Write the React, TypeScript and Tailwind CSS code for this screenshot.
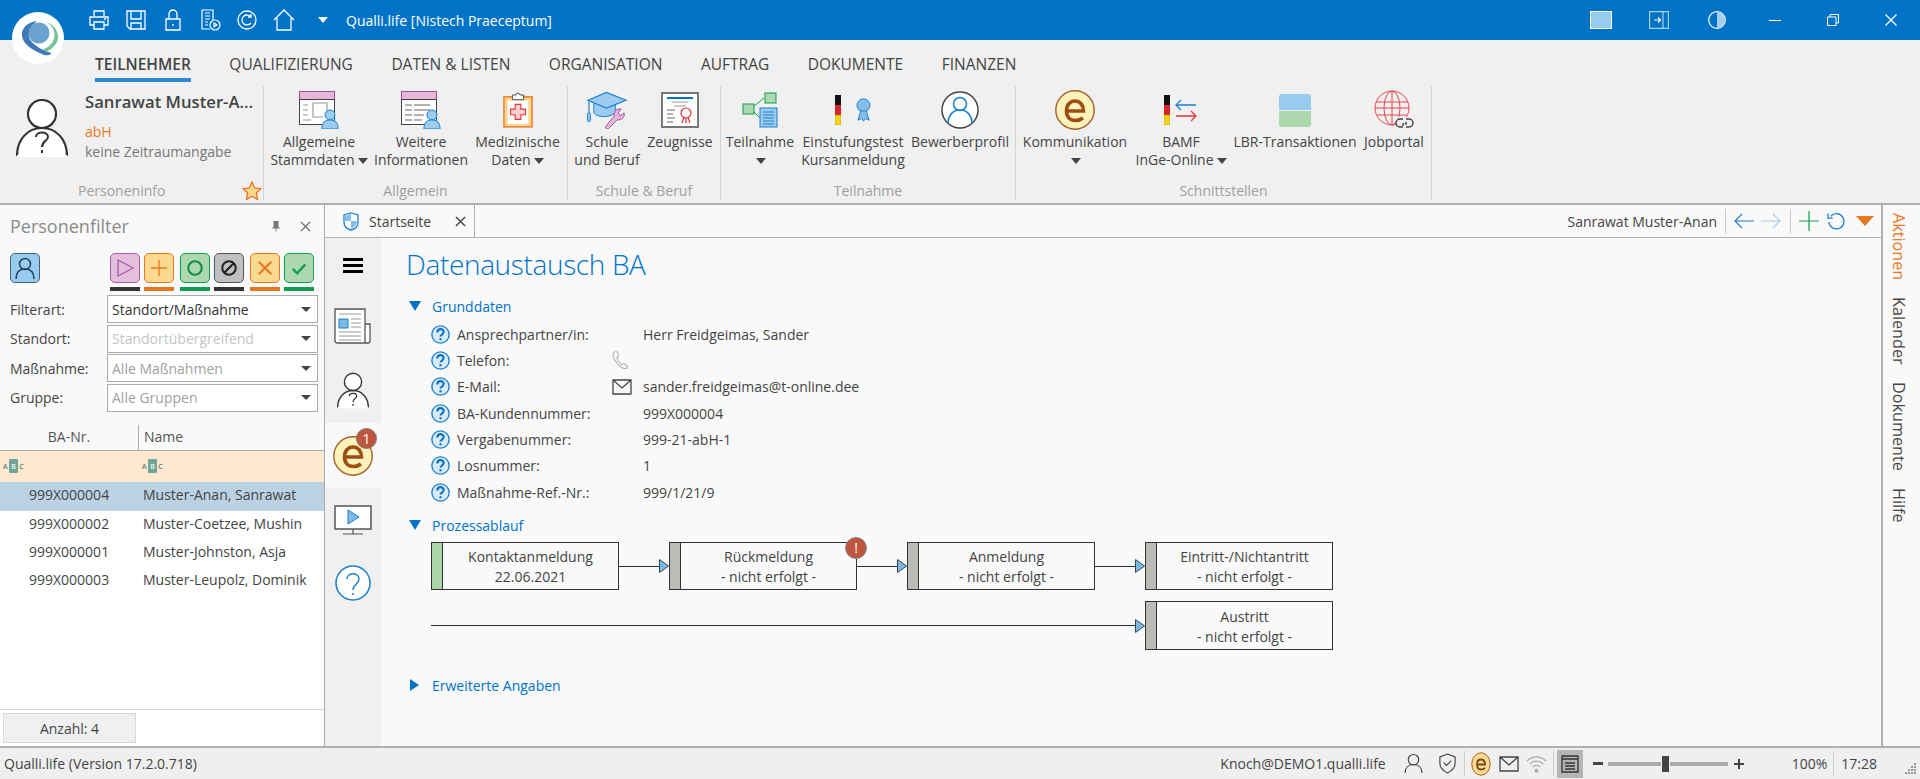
import type { ReactNode } from 'react';

type P = { className?: string };

const Logo = () => (
  <svg viewBox="0 0 52 52" className="w-[52px] h-[52px]">
    <circle cx="26" cy="26" r="26" fill="#fff" />
    <path d="M25 9C17 10 9 15 10 24c1 8 10 14 22 19 4 1 8-1 7-2-9-3-16-7-20-12-4-5-3-13 6-20z" fill="#3f78b6" />
    <circle cx="27" cy="21" r="10.5" fill="#69a1cf" />
    <path d="M34 10c6 3 10 9 8 17-2 5-6 9-11 10l3 3c6-3 12-8 12-15 0-7-5-13-12-15z" fill="#76c295" />
  </svg>
);

const W = 'none';
const Printer = () => (
  <svg viewBox="0 0 22 22" className="w-[22px] h-[22px]" fill={W} stroke="#fff" strokeWidth="1.3">
    <path d="M6 7V2h10v5M6 16H2V8h18v8h-4M6 13h10v7H6zM16 10h2" />
  </svg>
);
const Floppy = () => (
  <svg viewBox="0 0 22 22" className="w-[22px] h-[22px]" fill={W} stroke="#fff" strokeWidth="1.3">
    <path d="M2 2h18v18H5l-3-3zM6 2v8h10V2M6 20v-6h10v6" />
  </svg>
);
const Lock = () => (
  <svg viewBox="0 0 22 22" className="w-[22px] h-[22px]" fill={W} stroke="#fff" strokeWidth="1.3">
    <path d="M4 10h14v11H4zM7 10V5a4 4 0 0 1 8 0v5M11 15v2" />
  </svg>
);
const DocPlay = () => (
  <svg viewBox="0 0 22 22" className="w-[22px] h-[22px]" fill={W} stroke="#fff" strokeWidth="1.2">
    <path d="M3 1h11v10M3 1v19h8M6 4h5M6 7h5M6 10h5M6 13h3M6 16h3" />
    <circle cx="16" cy="16" r="5" />
    <path d="M15 14l3 2-3 2z" />
  </svg>
);
const Refresh = () => (
  <svg viewBox="0 0 22 22" className="w-[22px] h-[22px]" fill={W} stroke="#fff" strokeWidth="1.3">
    <circle cx="11" cy="11" r="9" />
    <path d="M15 8a5 5 0 1 0 0 6M15 5v3h-3" />
  </svg>
);
const Home = () => (
  <svg viewBox="0 0 22 22" className="w-[22px] h-[22px]" fill={W} stroke="#fff" strokeWidth="1.3">
    <path d="M1 11L11 1l10 10M4 9v12h14V9" />
  </svg>
);

const PersonQ = ({ className }: P) => (
  <svg viewBox="0 0 52 58" className={className} fill="#f0f0f0" stroke="#333" strokeWidth="2.2">
    <path d="M1 57C1 40 12 29 26 29s25 11 25 28" fill="#fff" />
    <path d="M1 57h50" stroke="#fff" />
    <ellipse cx="26" cy="15" rx="14" ry="14" fill="#fff" />
    <path d="M20 38c0-6 12-6 12 0 0 4-6 4-6 10" fill="none" strokeWidth="2" />
    <path d="M26 51v3" fill="none" strokeWidth="2" />
  </svg>
);

const Star = () => (
  <svg viewBox="0 0 20 20" className="w-[20px] h-[20px]">
    <path d="M10 1l2.7 6 6.3.7-4.7 4.3 1.3 6.5L10 15.2l-5.6 3.3 1.3-6.5L1 7.7 7.3 7z" fill="#f9d98b" stroke="#e87722" strokeWidth="1.3" />
  </svg>
);

const FormIcon = ({ lines }: { lines?: boolean }) => (
  <svg viewBox="0 0 40 38" className="w-[40px] h-[38px]">
    <rect x="0.5" y="0.5" width="35" height="8" fill="#e3b8da" stroke="#a04fa0" />
    <rect x="0.5" y="8.5" width="35" height="25" fill="#fff" stroke="#444" />
    {lines ? (
      <path d="M4 14h7M4 19h7M4 24h7M4 29h7M13 14h16M13 19h16M13 24h10M13 29h8" stroke="#999" strokeWidth="1.5" />
    ) : (
      <path d="M4 14h5M4 19h5M4 24h5M4 29h8M14 12h14v14M14 12v14h10" stroke="#999" strokeWidth="1.2" fill="none" />
    )}
    <circle cx="31" cy="24" r="5" fill="#9ccdf0" stroke="#1a7fcf" />
    <path d="M23 38c0-7 3-9 8-9s8 2 8 9z" fill="#9ccdf0" stroke="#1a7fcf" />
  </svg>
);

const MedIcon = () => (
  <svg viewBox="0 0 32 38" className="w-[30px] h-[38px]">
    <rect x="1" y="5" width="30" height="32" fill="#fbd68c" stroke="#e87722" strokeWidth="1.5" />
    <rect x="5" y="9" width="22" height="25" fill="#fff" />
    <path d="M10 3h4a2 2 0 0 1 4 0h4v5H10z" fill="#fff" stroke="#444" />
    <path d="M13 13h6v5h5v6h-5v5h-6v-5H8v-6h5z" fill="#fbd0d0" stroke="#e0353c" strokeWidth="1.2" />
  </svg>
);

const GradIcon = () => (
  <svg viewBox="0 0 42 38" className="w-[41px] h-[38px]">
    <path d="M7 12v10c4 5 16 5 22 0V12" fill="#9ccdf0" stroke="#1a7fcf" />
    <path d="M1 9L20 1l20 8-20 8z" fill="#9ccdf0" stroke="#1a7fcf" strokeWidth="1.2" />
    <path d="M2 10v14" stroke="#1a7fcf" strokeWidth="1.2" />
    <rect x="0.5" y="22" width="3" height="9" rx="1.5" fill="#9ccdf0" stroke="#1a7fcf" />
    <path d="M19 36l9-11c-1-4 2-8 7-7l-3 4 2 3 4-3c1 5-3 8-7 7l-9 9c-2 1-4-1-3-2z" fill="#e3b8da" stroke="#a04fa0" />
  </svg>
);

const CertIcon = () => (
  <svg viewBox="0 0 38 36" className="w-[38px] h-[36px]">
    <rect x="1" y="1" width="36" height="34" fill="#fff" stroke="#777" strokeWidth="2" />
    <path d="M6 6h26" stroke="#0173c7" strokeWidth="2" />
    <path d="M11 10h16M13 14h12" stroke="#999" strokeWidth="1.2" />
    <path d="M6 18h8M6 22h6M6 26h8M6 30h6" stroke="#999" strokeWidth="1.5" />
    <circle cx="25" cy="21" r="5" fill="#fff" stroke="#e0353c" strokeWidth="1.2" />
    <path d="M21 31l2-6M29 31l-2-6M25 26v5" stroke="#e0353c" strokeWidth="1.2" />
  </svg>
);

const TreeIcon = () => (
  <svg viewBox="0 0 36 36" className="w-[36px] h-[36px]">
    <path d="M11 15l11-9M11 19l7 7" stroke="#0f9d4f" fill="none" />
    <rect x="1" y="12" width="11" height="10" fill="#add8ae" stroke="#0f9d4f" />
    <rect x="23" y="1" width="11" height="10" fill="#add8ae" stroke="#0f9d4f" />
    <rect x="18" y="16" width="17" height="19" fill="#9ccdf0" stroke="#1a7fcf" />
    <path d="M21 20h11M21 23h11M21 26h11M21 29h11M21 32h11" stroke="#1a7fcf" />
  </svg>
);

const Flag = () => (
  <svg viewBox="0 0 6 30" className="w-[6px] h-[30px]">
    <rect width="6" height="10" fill="#111" />
    <rect y="10" width="6" height="10" fill="#d8232a" />
    <rect y="20" width="6" height="10" fill="#f2d21a" stroke="#a90" strokeWidth="0.5" />
  </svg>
);

const BadgeIcon = () => (
  <div className="flex items-center gap-[15px]">
    <Flag />
    <svg viewBox="0 0 16 28" className="w-[15px] h-[26px]">
      <circle cx="8" cy="9" r="7" fill="#86bde8" stroke="#1a7fcf" />
      <path d="M5 15l-3 10 4-2 2 3 2-3 4 2-3-10z" fill="#86bde8" stroke="#1a7fcf" />
    </svg>
  </div>
);

const ProfileIcon = () => (
  <svg viewBox="0 0 38 38" className="w-[38px] h-[38px]">
    <circle cx="19" cy="19" r="18" fill="#fff" stroke="#444" strokeWidth="1.5" />
    <circle cx="19" cy="13" r="6.5" fill="none" stroke="#1a7fcf" strokeWidth="1.5" />
    <path d="M7 33c0-9 5-14 12-14s12 5 12 14" fill="none" stroke="#1a7fcf" strokeWidth="1.5" />
  </svg>
);

const EIcon = ({ className }: P) => (
  <svg viewBox="0 0 40 40" className={className}>
    <circle cx="20" cy="20" r="19.2" fill="#fdf3ba" stroke="#a5612a" strokeWidth="1.4" />
    <path d="M11.5 21h17c0-6-3.5-10-8.5-10s-8.5 4-8.5 10 3.5 9.5 9 9.5c3 0 5.500-1 7.500-2.500" fill="none" stroke="#9c4f14" strokeWidth="3.6" />
  </svg>
);

const EStatus = () => (
  <svg viewBox="0 0 20 24" className="ml-[6px] w-[20px] h-[24px]">
    <ellipse cx="10" cy="12" rx="9.2" ry="11.2" fill="#fbd98e" stroke="#a5612a" strokeWidth="1" />
    <path d="M6 12.5h8c0-3-1.5-5-4-5s-4 2-4 5 1.5 5 4 5c1.5 0 3-.5 4-1.500" fill="none" stroke="#7a4a1c" strokeWidth="1.8" />
  </svg>
);

const BamfIcon = () => (
  <div className="flex items-center gap-[4px]">
    <Flag />
    <svg viewBox="0 0 24 26" className="w-[24px] h-[26px]" fill="none" strokeWidth="1.3">
      <path d="M22 8H2M7 3L2 8l5 5" stroke="#1a7fcf" />
      <path d="M2 19h20M17 14l5 5-5 5" stroke="#e0353c" />
    </svg>
  </div>
);

const LbrIcon = () => (
  <div className="flex flex-col gap-[1px] w-[32px]">
    <div className="h-[16px] rounded-t-[3px] bg-[#97cbef]" />
    <div className="h-[16px] rounded-b-[3px] bg-[#add8ae]" />
  </div>
);

const GlobeIcon = () => (
  <svg viewBox="0 0 40 40" className="w-[40px] h-[40px]" fill="none">
    <g stroke="#e8474c" strokeWidth="1">
      <circle cx="18" cy="18" r="17" />
      <ellipse cx="18" cy="18" rx="8" ry="17" />
      <path d="M18 1v34M2 12h32M1 18h34M3 25h30" />
    </g>
    <rect x="22" y="27" width="17" height="12" fill="#f0f0f0" />
    <path d="M29 29h-3a4 4 0 0 0 0 8h3M32 29h3a4 4 0 0 1 0 8h-3M29 33v3M32 32v3" stroke="#444" strokeWidth="1.5" />
  </svg>
);

const Caret = () => <span className="inline-block ml-[3px] w-0 h-0 border-l-[5px] border-r-[5px] border-t-[6px] border-l-transparent border-r-transparent border-t-[#444] align-middle" />;

type RibbonBtn = { w: string; icon: ReactNode; lines: ReactNode[] };

const RibbonButton = ({ w, icon, lines }: RibbonBtn) => (
  <div className={`flex flex-col items-center ${w}`}>
    <div className="mt-[2px] h-[44px] flex items-center justify-center">{icon}</div>
    <div className="mt-[1px] text-center leading-[18px] text-[#444] whitespace-nowrap">
      {lines.map((l, i) => (
        <div key={i}>{l}</div>
      ))}
    </div>
  </div>
);

const RibbonGroup = ({ w, label, children }: { w: string; label: string; children: ReactNode }) => (
  <div className={`flex flex-col h-[114px] border-r border-[#d2d2d2] ${w}`}>
    <div className="flex h-[96px]">{children}</div>
    <div className="h-[18px] leading-[18px] text-center text-[#a0a0a0]">{label}</div>
  </div>
);

const tabs = ['TEILNEHMER', 'QUALIFIZIERUNG', 'DATEN & LISTEN', 'ORGANISATION', 'AUFTRAG', 'DOKUMENTE', 'FINANZEN'];

function Ribbon() {
  return (
    <div className="h-[165px] bg-[#f0f0f0] border-b-2 border-[#b0b0b0] shrink-0">
      <div className="flex h-[46px] pl-[95px] gap-[38.5px] text-[15.5px] text-[#444]">
        {tabs.map((t, i) => (
          <div key={t} className={i === 0 ? 'h-[42px] pt-[13px] border-b-4 border-[#2d88d6] font-semibold' : 'h-[42px] pt-[13px]'}>
            {t}
          </div>
        ))}
      </div>
      <div className="flex">
        <RibbonGroup w="w-[264px]" label="">
          <div className="flex relative w-full">
            <PersonQ className="ml-[16px] mt-[13px] w-[52px] h-[58px]" />
            <div className="ml-[17px] whitespace-nowrap">
              <div className="mt-[6px] text-[16.7px] leading-[20px] font-semibold text-[#444]">Sanrawat Muster-A...</div>
              <div className="mt-[10px] leading-[20px] text-[#e87722]">abH</div>
              <div className="leading-[20px] text-[#777]">keine Zeitraumangabe</div>
            </div>
          </div>
          <div className="absolute left-[78px] top-[182px] text-[#a0a0a0] leading-[18px]">Personeninfo</div>
          <div className="absolute left-[242px] top-[181px]">
            <Star />
          </div>
        </RibbonGroup>
        <RibbonGroup w="w-[304px]" label="Allgemein">
          <RibbonButton w="w-[110px]" icon={<FormIcon />} lines={['Allgemeine', <>Stammdaten<Caret /></>]} />
          <RibbonButton w="w-[94px]" icon={<FormIcon lines />} lines={['Weitere', 'Informationen']} />
          <RibbonButton w="w-[99px]" icon={<MedIcon />} lines={['Medizinische', <>Daten<Caret /></>]} />
        </RibbonGroup>
        <RibbonGroup w="w-[153px]" label="Schule & Beruf">
          <RibbonButton w="w-[78px]" icon={<GradIcon />} lines={['Schule', 'und Beruf']} />
          <RibbonButton w="w-[68px]" icon={<CertIcon />} lines={['Zeugnisse']} />
        </RibbonGroup>
        <RibbonGroup w="w-[295px]" label="Teilnahme">
          <RibbonButton w="w-[78px]" icon={<TreeIcon />} lines={['Teilnahme', <Caret />]} />
          <RibbonButton w="w-[108px]" icon={<BadgeIcon />} lines={['Einstufungstest', 'Kursanmeldung']} />
          <RibbonButton w="w-[106px]" icon={<ProfileIcon />} lines={['Bewerberprofil']} />
        </RibbonGroup>
        <RibbonGroup w="w-[416px]" label="Schnittstellen">
          <RibbonButton w="w-[118px]" icon={<EIcon className="w-[40px] h-[40px]" />} lines={['Kommunikation', <Caret />]} />
          <RibbonButton w="w-[94px]" icon={<BamfIcon />} lines={['BAMF', <>InGe-Online<Caret /></>]} />
          <RibbonButton w="w-[134px]" icon={<LbrIcon />} lines={['LBR-Transaktionen']} />
          <RibbonButton w="w-[64px]" icon={<GlobeIcon />} lines={['Jobportal']} />
        </RibbonGroup>
      </div>
    </div>
  );
}

const FilterBtn = ({ bg, bar, border, children, className }: { bg: string; bar: string; border: string; children: ReactNode; className?: string }) => (
  <div className={`flex flex-col gap-[4px] w-[30px] ${className ?? ''}`}>
    <div className={`h-[30px] rounded-[5px] border flex items-center justify-center ${bg} ${border}`}>{children}</div>
    <div className={`h-[4px] ${bar}`} />
  </div>
);

const Select = ({ label, value, color }: { label: string; value: string; color: string }) => (
  <div className="flex items-center h-[28px] pl-[10px] pr-[6px]">
    <div className="w-[97px] text-[#444]">{label}</div>
    <div className="flex-1 h-full bg-white border border-[#acacac] flex items-center pl-[4px] pr-[6px] justify-between">
      <span className={color}>{value}</span>
      <span className="w-0 h-0 border-l-[5px] border-r-[5px] border-t-[5px] border-l-transparent border-r-transparent border-t-[#444]" />
    </div>
  </div>
);

const Abc = () => (
  <span className="flex items-center gap-[1px] text-[7px] leading-[7px] font-semibold text-[#5c7d73]">
    <span>A</span>
    <span className="px-[2.5px] py-[3.5px] rounded-[1px] bg-[#6fa597] text-[#e9f3ef]">B</span>
    <span>C</span>
  </span>
);

const people = [
  ['999X000004', 'Muster-Anan, Sanrawat'],
  ['999X000002', 'Muster-Coetzee, Mushin'],
  ['999X000001', 'Muster-Johnston, Asja'],
  ['999X000003', 'Muster-Leupolz, Dominik'],
];

function FilterPanel() {
  return (
    <div className="w-[325px] shrink-0 border-r border-[#acacac] bg-[#f9f9f9] flex flex-col">
      <div className="flex items-center h-[42px] pl-[10px] pr-[13px]">
        <span className="text-[18px] text-[#8a8a8a] flex-1">Personenfilter</span>
        <svg viewBox="0 0 12 14" className="w-[10px] h-[12px] mr-[19px]" fill="#777">
          <path d="M3 1h6v7l2 2H1l2-2zM5.5 10h1v4h-1z" />
        </svg>
        <svg viewBox="0 0 12 12" className="w-[11px] h-[11px]" stroke="#666" strokeWidth="1.4">
          <path d="M1 1l10 10M11 1L1 11" />
        </svg>
      </div>
      <div className="flex mt-[6px] pl-[10px]">
        <div className="w-[30px] h-[30px] rounded-[5px] bg-[#97cbef] border border-[#44617a] flex items-center justify-center mr-[70px]">
          <svg viewBox="0 0 24 24" className="w-[24px] h-[24px]" fill="none" stroke="#29415a" strokeWidth="1.5">
            <circle cx="12" cy="8" r="5.5" />
            <path d="M3 23c0-7 4-10 9-10s9 3 9 10" />
          </svg>
        </div>
        <FilterBtn bg="bg-[#e3bfdc]" border="border-[#a85ca8]" bar="bg-[#333]" className="mr-[4px]">
          <svg viewBox="0 0 20 20" className="w-[20px] h-[20px]" fill="none" stroke="#a85ca8" strokeWidth="1.3"><path d="M3 2l15 8-15 8z" /></svg>
        </FilterBtn>
        <FilterBtn bg="bg-[#fbd98e]" border="border-[#e87722]" bar="bg-[#e87722]" className="mr-[6px]">
          <svg viewBox="0 0 20 20" className="w-[20px] h-[20px]" fill="none" stroke="#e87722" strokeWidth="1.3"><path d="M10 2v16M2 10h16" /></svg>
        </FilterBtn>
        <FilterBtn bg="bg-[#add8ae]" border="border-[#0f9d4f]" bar="bg-[#0f9d4f]" className="mr-[4px]">
          <svg viewBox="0 0 20 20" className="w-[18px] h-[18px]" fill="none" stroke="#0f8d47" strokeWidth="2.3"><circle cx="10" cy="10" r="7.5" /></svg>
        </FilterBtn>
        <FilterBtn bg="bg-[#c0bfbd]" border="border-[#555]" bar="bg-[#333]" className="mr-[6px]">
          <svg viewBox="0 0 20 20" className="w-[18px] h-[18px]" fill="none" stroke="#222" strokeWidth="2.3"><circle cx="10" cy="10" r="7.5" /><path d="M5 15L15 5" /></svg>
        </FilterBtn>
        <FilterBtn bg="bg-[#fbd98e]" border="border-[#e87722]" bar="bg-[#e87722]" className="mr-[4px]">
          <svg viewBox="0 0 20 20" className="w-[18px] h-[18px]" fill="none" stroke="#e87722" strokeWidth="2.2"><path d="M3 3l14 14M17 3L3 17" /></svg>
        </FilterBtn>
        <FilterBtn bg="bg-[#add8ae]" border="border-[#0f9d4f]" bar="bg-[#0f9d4f]">
          <svg viewBox="0 0 20 20" className="w-[18px] h-[18px]" fill="none" stroke="#0f9d4f" strokeWidth="2.6"><path d="M3 11l5 5 9-10" /></svg>
        </FilterBtn>
      </div>
      <div className="mt-[4px] flex flex-col gap-[1.5px]">
        <Select label="Filterart:" value="Standort/Maßnahme" color="text-[#333]" />
        <Select label="Standort:" value="Standortübergreifend" color="text-[#c4c4c4]" />
        <Select label="Maßnahme:" value="Alle Maßnahmen" color="text-[#a0a0a0]" />
        <Select label="Gruppe:" value="Alle Gruppen" color="text-[#a0a0a0]" />
      </div>
      <div className="flex mt-[13px] h-[26px] border-b border-[#acacac] text-[#555]">
        <div className="w-[138px] text-center leading-[24px]">BA-Nr.</div>
        <div className="border-l border-[#acacac] pl-[5px] leading-[24px]">Name</div>
      </div>
      <div className="flex-1 bg-white flex flex-col">
        <div className="flex items-center h-[31px] bg-[#fde8d0]">
          <div className="w-[142px] pl-[3px]"><Abc /></div>
          <Abc />
        </div>
        {people.map(([nr, name], i) => (
          <div key={nr} className={i === 0 ? 'flex items-center h-[29px] pb-[3px] bg-[#bad2e3] text-[#444]' : 'flex items-center h-[28px] pb-[3px] text-[#444]'}>
            <div className="w-[143px] pl-[29px]">{nr}</div>
            <div className="whitespace-nowrap">{name}</div>
          </div>
        ))}
        <div className="flex-1" />
        <div className="h-[37px] border-t border-[#d2d2d2] pl-[3px] pt-[3px]">
          <div className="w-[133px] h-[30px] bg-[#f0f0f0] border border-[#d8d8d8] flex items-center justify-center text-[#444]">Anzahl: 4</div>
        </div>
      </div>
    </div>
  );
}

const Help = () => (
  <svg viewBox="0 0 18 18" className="w-[19px] h-[19px] shrink-0" fill="none">
    <circle cx="9" cy="9" r="8.2" fill="#d7ebf9" stroke="#1a7fcf" strokeWidth="1.3" />
    <path d="M6 7c0-4 6-4 6-.5 0 2.5-3 2.5-3 4.5" stroke="#0f70bd" strokeWidth="2" />
    <path d="M9 12.5v2" stroke="#0f70bd" strokeWidth="2" />
  </svg>
);

const Phone = () => (
  <svg viewBox="0 0 18 20" className="w-[17px] h-[20px]" fill="none" stroke="#b4b4b4" strokeWidth="1.2">
    <path d="M2 2c1-1 3-1 4 0l1 4-2 2c1 3 3 5 5 7l3-1 3 2c1 2 0 3-2 3-5 0-12-8-13-14 0-1 0-2 1-3z" />
  </svg>
);

const Mail = () => (
  <svg viewBox="0 0 20 16" className="w-[20px] h-[16px]" fill="none" stroke="#444" strokeWidth="1.3">
    <path d="M1 1h18v14H1zM1 1l9 8 9-8" />
  </svg>
);

const fields: [string, string, ReactNode?][] = [
  ['Ansprechpartner/in:', 'Herr Freidgeimas, Sander'],
  ['Telefon:', '', <Phone />],
  ['E-Mail:', 'sander.freidgeimas@t-online.dee', <Mail />],
  ['BA-Kundennummer:', '999X000004'],
  ['Vergabenummer:', '999-21-abH-1'],
  ['Losnummer:', '1'],
  ['Maßnahme-Ref.-Nr.:', '999/1/21/9'],
];

const Triangle = ({ open }: { open?: boolean }) =>
  open ? (
    <span className="w-0 h-0 border-l-[6px] border-r-[6px] border-t-[10px] border-l-transparent border-r-transparent border-t-[#0173c7]" />
  ) : (
    <span className="w-0 h-0 ml-[1px] mr-[2px] border-t-[6px] border-b-[6px] border-l-[9px] border-t-transparent border-b-transparent border-l-[#0173c7]" />
  );

const Section = ({ title, open, className }: { title: string; open?: boolean; className?: string }) => (
  <div className={`flex items-center h-[20px] pl-[3px] gap-[11px] text-[#0173c7] ${className ?? ''}`}>
    <Triangle open={open} />
    <span>{title}</span>
  </div>
);

const Step = ({ a, b, done, alert }: { a: string; b: string; done?: boolean; alert?: boolean }) => (
  <div className="relative flex w-[188px] h-full bg-[#f9f9f9] border-[1.5px] border-[#333] text-[#444] shrink-0">
    <div className={done ? 'w-[11px] bg-[#a9d5a9] border-r-[1.5px] border-[#333]' : 'w-[11px] bg-[#bdbbb8] border-r-[1.5px] border-[#333]'} />
    <div className="flex-1 flex flex-col items-center justify-center leading-[20px] pt-[2px]">
      <div>{a}</div>
      <div>{b}</div>
    </div>
    {alert && (
      <div className="absolute -top-[6px] -right-[11px] w-[22px] h-[22px] rounded-full bg-[#c0553d] border border-[#888] text-white flex items-center justify-center text-[14px] leading-none z-10">!</div>
    )}
  </div>
);

const Connector = ({ w }: { w: string }) => (
  <div className={`flex items-center ${w} shrink-0`}>
    <div className="flex-1 h-px bg-[#263238]" />
    <svg viewBox="0 0 10 14" className="w-[10px] h-[14px] shrink-0">
      <path d="M.5.5L9.5 7l-9 6.5z" fill="#7db9e6" stroke="#37474f" />
    </svg>
  </div>
);

const NewsIcon = () => (
  <svg viewBox="0 0 38 36" className="w-[38px] h-[36px]" fill="none">
    <path d="M1 1h30v34H3a2 2 0 0 1-2-2zM31 16h5v17a2 2 0 0 1-2 2h-3" fill="#fff" stroke="#555" strokeWidth="1.3" />
    <rect x="5" y="11" width="9" height="9" fill="#7db9e6" stroke="#1a7fcf" />
    <path d="M5 6h22M17 11h10M17 15h10M17 19h10M5 24h22M5 28h22M5 32h22" stroke="#999" strokeWidth="1.2" />
  </svg>
);

const MonitorIcon = () => (
  <svg viewBox="0 0 38 30" className="w-[38px] h-[30px]" fill="none">
    <rect x="1" y="1" width="36" height="23" fill="#fff" stroke="#555" strokeWidth="1.5" />
    <path d="M14 5l11 7-11 7z" fill="#7db9e6" stroke="#1a7fcf" />
    <path d="M19 24v5M9 29h20" stroke="#555" strokeWidth="1.2" />
  </svg>
);

function Rail() {
  return (
    <div className="w-[56px] shrink-0 flex flex-col">
      <div className="h-[185px] bg-[#f0f0f0] flex flex-col items-center">
        <div className="mt-[20px] w-[20px] h-[15px] border-y-[3px] border-black flex items-center">
          <div className="w-full h-[3px] bg-black" />
        </div>
        <div className="mt-[35px]"><NewsIcon /></div>
        <PersonQ className="mt-[28px] w-[32px] h-[37px]" />
      </div>
      <div className="relative h-[65px] flex items-center justify-center">
        <EIcon className="w-[40px] h-[40px]" />
        <div className="absolute top-[5px] left-[31px] w-[21px] h-[21px] rounded-full bg-[#c0553d] border border-[#777] text-white text-[14px] flex items-center justify-center">1</div>
      </div>
      <div className="flex-1 bg-[#f0f0f0] flex flex-col items-center">
        <div className="mt-[17px]"><MonitorIcon /></div>
        <div className="mt-[30px] w-[36px] h-[36px]">
          <svg viewBox="0 0 36 36" className="w-[36px] h-[36px]" fill="none" stroke="#1a7fcf" strokeWidth="1.5">
            <circle cx="18" cy="18" r="17" fill="#fff" />
            <path d="M12 14c0-7 12-7 12 0 0 5-6 5-6 11M18 28v2" />
          </svg>
        </div>
      </div>
    </div>
  );
}

function Main() {
  return (
    <div className="flex-1 min-w-0 flex flex-col bg-[#f9f9f9]">
      <div className="flex h-[33px] shrink-0 border-b border-[#b0b0b0]">
        <div className="flex items-center w-[150px] pl-[18px] border-r border-[#b0b0b0]">
          <svg viewBox="0 0 16 19" className="w-[16px] h-[19px]">
            <path d="M8 1l7 2v7c0 4-3 7-7 8-4-1-7-4-7-8V3z" fill="#fff" stroke="#1a7fcf" strokeWidth="1.3" />
            <path d="M8 2v7H2V4zM8 9h6c0 4-3 6-6 8z" fill="#86bde8" />
          </svg>
          <span className="ml-[10px] text-[#444]">Startseite</span>
          <svg viewBox="0 0 12 12" className="ml-[24px] w-[11px] h-[11px]" stroke="#444" strokeWidth="1.5">
            <path d="M1 1l10 10M11 1L1 11" />
          </svg>
        </div>
        <div className="flex-1 flex items-center justify-end pr-[7px] text-[#444]">
          <span className="mr-[8px]">Sanrawat Muster-Anan</span>
          <div className="w-px h-[25px] bg-[#ccc]" />
          <svg viewBox="0 0 20 16" className="ml-[8px] w-[20px] h-[16px]" fill="none" stroke="#1a7fcf" strokeWidth="1.2"><path d="M20 8H1M8 1L1 8l7 7" /></svg>
          <svg viewBox="0 0 20 16" className="ml-[7px] w-[20px] h-[16px]" fill="none" stroke="#a9d0ee" strokeWidth="1.2"><path d="M0 8h19M12 1l7 7-7 7" /></svg>
          <div className="ml-[9px] w-px h-[25px] bg-[#ccc]" />
          <svg viewBox="0 0 20 20" className="ml-[8px] w-[20px] h-[20px]" fill="none" stroke="#0f9d4f" strokeWidth="1.2"><path d="M10 0v20M0 10h20" /></svg>
          <svg viewBox="0 0 20 20" className="ml-[8px] w-[19px] h-[20px]" fill="none" stroke="#1a7fcf" strokeWidth="1.3"><path d="M4 5a8 8 0 1 1-2 6M1 2v5h5" /></svg>
          <span className="ml-[10px] w-0 h-0 border-l-[9px] border-r-[9px] border-t-[10px] border-l-transparent border-r-transparent border-t-[#e87722]" />
        </div>
      </div>
      <div className="flex-1 flex min-h-0">
        <Rail />
        <div className="flex-1 pl-[25px]">
          <div className="mt-[8px] h-[37px] text-[28px] tracking-[-0.35px] leading-[37px] font-light text-[#0173c7]">Datenaustausch BA</div>
          <Section title="Grunddaten" open className="mt-[13px]" />
          <div className="mt-[5px] pl-[25px]">
            {fields.map(([label, value, icon]) => (
              <div key={label} className="flex items-center h-[26.33px] text-[#444]">
                <Help />
                <div className="ml-[7px] w-[155px]">{label}</div>
                <div className="w-[31px]">{icon}</div>
                <div>{value}</div>
              </div>
            ))}
          </div>
          <Section title="Prozessablauf" open className="mt-[10px]" />
          <div className="pl-[25px] mt-[7px]">
            <div className="flex h-[48px]">
              <Step a="Kontaktanmeldung" b="22.06.2021" done />
              <Connector w="w-[50px]" />
              <Step a="Rückmeldung" b="- nicht erfolgt -" alert />
              <Connector w="w-[50px]" />
              <Step a="Anmeldung" b="- nicht erfolgt -" />
              <Connector w="w-[50px]" />
              <Step a="Eintritt-/Nichtantritt" b="- nicht erfolgt -" />
            </div>
            <div className="flex h-[49px] mt-[11px]">
              <Connector w="w-[714px]" />
              <Step a="Austritt" b="- nicht erfolgt -" />
            </div>
          </div>
          <Section title="Erweiterte Angaben" className="mt-[25px]" />
        </div>
      </div>
    </div>
  );
}

const railTabs: [string, string][] = [
  ['Aktionen', 'text-[#e87722]'],
  ['Kalender', 'text-[#444]'],
  ['Dokumente', 'text-[#444]'],
  ['Hilfe', 'text-[#444]'],
];

const RightRail = () => (
  <div className="w-[39px] shrink-0 border-l-2 border-[#b0b0b0] bg-[#f9f9f9] flex flex-col items-center pt-[8px] pr-[5px] gap-[17px]">
    {railTabs.map(([t, c]) => (
      <div key={t} className={`[writing-mode:vertical-rl] text-[16.2px] leading-[20px] ${c}`}>
        {t}
      </div>
    ))}
  </div>
);

function StatusBar() {
  return (
    <div className="h-[33px] shrink-0 bg-[#efefef] border-t-2 border-[#b0b0b0] flex items-center text-[#444]">
      <div className="pl-[4px] flex-1">Qualli.life (Version 17.2.0.718)</div>
      <div className="flex items-center h-full">
        <span>Knoch@DEMO1.qualli.life</span>
        <svg viewBox="0 0 20 22" className="ml-[18px] w-[19px] h-[21px]" fill="none" stroke="#444" strokeWidth="1.2">
          <circle cx="10" cy="7" r="5.5" />
          <path d="M1 21c0-6 4-9 9-9s9 3 9 9" />
        </svg>
        <svg viewBox="0 0 20 22" className="ml-[15px] w-[19px] h-[21px]" fill="none" stroke="#444" strokeWidth="1.2">
          <path d="M10 1l8 3v7c0 5-4 8-8 10-4-2-8-5-8-10V4z" />
          <path d="M6 10l3 3 5-5" />
        </svg>
        <div className="ml-[7px] w-px h-[25px] bg-[#ccc]" />
        <EStatus />
        <div className="ml-[8px]"><Mail /></div>
        <svg viewBox="0 0 22 20" className="ml-[7px] w-[21px] h-[20px]" fill="none" stroke="#a8a8a8" strokeWidth="1.2">
          <path d="M1 7c6-6 14-6 20 0M4 10c4-4 10-4 14 0M7 13c2-2 6-2 8 0" />
          <circle cx="11" cy="17" r="1.5" fill="#a8a8a8" />
        </svg>
        <div className="ml-[6px] w-px h-[25px] bg-[#ccc]" />
        <div className="ml-[3px] w-[26px] h-[28px] bg-[#b5b5b5] flex items-center justify-center">
          <svg viewBox="0 0 18 18" className="w-[18px] h-[18px]" fill="none" stroke="#333" strokeWidth="1.3">
            <path d="M1 1h16v16H1zM1 4h16M4 8h10M4 11h10M4 14h10" />
          </svg>
        </div>
        <div className="ml-[10px] w-[10px] h-[2.5px] bg-[#444]" />
        <div className="relative ml-[5px] w-[120px] h-[4px] bg-[#aaa]">
          <div className="absolute left-[53px] -top-[6px] w-[9px] h-[16px] bg-[#444] border-x border-[#efefef]" />
        </div>
        <div className="relative ml-[6px] w-[10px] h-[10px]">
          <div className="absolute top-[4px] w-[10px] h-[2.5px] bg-[#444]" />
          <div className="absolute left-[4px] w-[2.5px] h-[10px] bg-[#444]" />
        </div>
        <span className="ml-[48px]">100%</span>
        <div className="ml-[6px] w-px h-[25px] bg-[#ccc]" />
        <span className="ml-[7px]">17:28</span>
        <svg viewBox="0 0 12 12" className="ml-[28px] mt-[10px] w-[12px] h-[12px]" fill="#999">
          <rect x="9" y="0" width="2" height="2" /><rect x="6" y="3" width="2" height="2" /><rect x="9" y="3" width="2" height="2" />
          <rect x="3" y="6" width="2" height="2" /><rect x="6" y="6" width="2" height="2" /><rect x="9" y="6" width="2" height="2" />
          <rect x="0" y="9" width="2" height="2" /><rect x="3" y="9" width="2" height="2" /><rect x="6" y="9" width="2" height="2" /><rect x="9" y="9" width="2" height="2" />
        </svg>
        <div className="w-[3px]" />
      </div>
    </div>
  );
}

export default function App() {
  return (
    <div className="relative h-screen w-full overflow-hidden flex flex-col bg-[#f0f0f0] text-[14px] font-['Open_Sans',sans-serif]">
      <div className="flex items-center h-[40px] shrink-0 bg-[#0173c7] text-white pl-[80px]">
        {[<Printer />, <Floppy />, <Lock />, <DocPlay />, <Refresh />, <Home />].map((ic, i) => (
          <div key={i} className="w-[37px] flex justify-center">{ic}</div>
        ))}
        <span className="ml-[16px] w-0 h-0 border-l-[5px] border-r-[5px] border-t-[6px] border-l-transparent border-r-transparent border-t-white" />
        <span className="ml-[18px]">Qualli.life [Nistech Praeceptum]</span>
        <div className="flex-1" />
        <div className="w-[22px] h-[18px] bg-[#97cbef] border border-white" />
        <svg viewBox="0 0 20 18" className="ml-[37px] w-[20px] h-[18px]" fill="none" stroke="#a9d0ee" strokeWidth="1.2">
          <path d="M.6.6h18.8v16.8H.6zM14 .6v16.8" />
          <path d="M5 9h6M9 6.5L11.5 9 9 11.5" stroke="#fff" />
        </svg>
        <svg viewBox="0 0 18 18" className="ml-[39px] w-[18px] h-[18px]">
          <circle cx="9" cy="9" r="8.3" fill="#0173c7" stroke="#fff" strokeWidth="1.2" />
          <path d="M9 1a8 8 0 0 1 0 16z" fill="#a9d0ee" />
        </svg>
        <div className="ml-[43px] w-[12px] h-px bg-white" />
        <svg viewBox="0 0 12 12" className="ml-[46px] w-[12px] h-[12px]" fill="none" stroke="#fff">
          <path d="M.5 3h8.5v8.5H.5zM3 3V.5h8.500V9H9" />
        </svg>
        <svg viewBox="0 0 12 12" className="ml-[46px] mr-[23px] w-[12px] h-[12px]" stroke="#fff" strokeWidth="1.3">
          <path d="M.5.5l11 11M11.5.5l-11 11" />
        </svg>
      </div>
      <Ribbon />
      <div className="flex-1 flex min-h-0">
        <FilterPanel />
        <Main />
        <RightRail />
      </div>
      <StatusBar />
      <div className="absolute left-[12px] top-[12px]">
        <Logo />
      </div>
    </div>
  );
}
